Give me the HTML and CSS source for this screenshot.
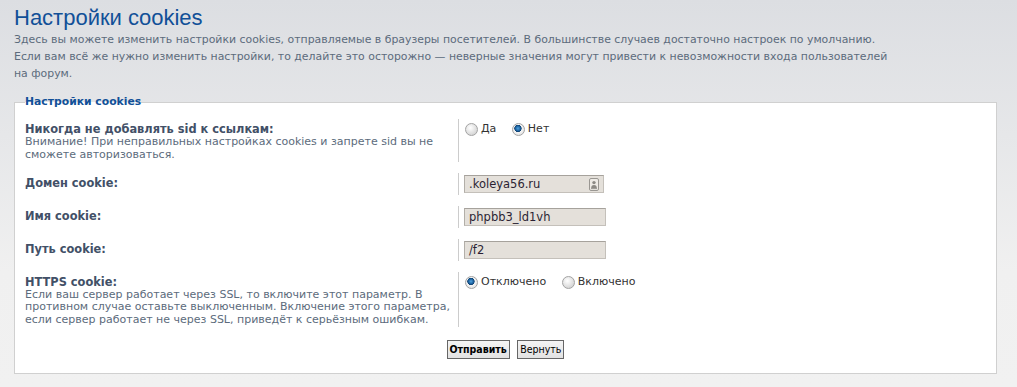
FILE: index.html
```html
<!DOCTYPE html>
<html lang="ru">
<head>
  <meta charset="UTF-8">
  <title>Настройки cookies</title>
  <link rel="stylesheet" href="styles.css">
</head>
<body>
  <div class="main">
    <h1>Настройки cookies</h1>
    <p class="intro">Здесь вы можете изменить настройки cookies, отправляемые в браузеры посетителей. В большинстве случаев достаточно настроек по умолчанию.<br>Если вам всё же нужно изменить настройки, то делайте это осторожно — неверные значения могут привести к невозможности входа пользователей на форум.</p>

    <form>
      <fieldset>
        <legend>Настройки cookies</legend>

        <dl>
          <dt>
            <label>Никогда не добавлять sid к ссылкам:</label>
            <span class="explain">Внимание! При неправильных настройках cookies и запрете sid вы не сможете авторизоваться.</span>
          </dt>
          <dd>
            <span class="radio"></span><span class="opt">Да</span>
            <span class="radio checked"></span><span class="opt">Нет</span>
          </dd>
        </dl>

        <dl>
          <dt><label>Домен cookie:</label></dt>
          <dd>
            <span class="field">
              <span class="input short">.koleya56.ru</span>
              <svg class="autofill" width="10" height="13" viewBox="0 0 10 13">
                <rect x="0.5" y="0.5" width="9" height="12" rx="1.5" fill="#eeebe6" stroke="#9a9792"/>
                <circle cx="5" cy="4.6" r="1.7" fill="#8d8a85"/>
                <path d="M2.2 10 Q2.2 6.9 5 6.9 Q7.8 6.9 7.8 10 Z" fill="#8d8a85"/>
                <rect x="2" y="10.2" width="6" height="0.9" fill="#8d8a85"/>
              </svg>
            </span>
          </dd>
        </dl>

        <dl>
          <dt><label>Имя cookie:</label></dt>
          <dd><span class="input">phpbb3_ld1vh</span></dd>
        </dl>

        <dl>
          <dt><label>Путь cookie:</label></dt>
          <dd><span class="input">/f2</span></dd>
        </dl>

        <dl>
          <dt>
            <label>HTTPS cookie:</label>
            <span class="explain">Если ваш сервер работает через SSL, то включите этот параметр. В противном случае оставьте выключенным. Включение этого параметра, если сервер работает не через SSL, приведёт к серьёзным ошибкам.</span>
          </dt>
          <dd>
            <span class="radio checked"></span><span class="opt">Отключено</span>
            <span class="radio"></span><span class="opt">Включено</span>
          </dd>
        </dl>

        <p class="submit-buttons">
          <button type="button" class="button1">Отправить</button>
          <button type="button" class="button2">Вернуть</button>
        </p>
      </fieldset>
    </form>
  </div>
</body>
</html>
```

FILE: styles.css
```css
:root {
  --title-color: #115098;
  --text-color: #536482;
  --label-color: #425067;
  --border-color: #cccccc;
}

html, body {
  height: 100%;
}

body {
  margin: 0;
  font-family: "DejaVu Sans", Verdana, sans-serif;
  font-size: 11px;
  color: var(--text-color);
  background: linear-gradient(#dcdee2, #f0f0f0 70%, #f1f1f1);
}

.main {
  padding: 0 20px 0 14px;
}

h1 {
  margin: 0;
  padding-top: 5px;
  font-family: "Liberation Sans", Arial, sans-serif;
  font-size: 22px;
  font-weight: normal;
  line-height: 26px;
  color: var(--title-color);
}

.intro {
  margin: 0 96px 0 0;
  font-size: 10.9px;
  line-height: 17px;
  color: #5c6b7c;
}

form {
  margin-top: 13px;
}

fieldset {
  margin: 0;
  padding: 10px 10px 14px 10px;
  background: #ffffff;
  border: 1px solid #d0d0d0;
}

legend {
  padding: 0;
  font-size: 10.8px;
  font-weight: bold;
  line-height: 14px;
  color: var(--title-color);
}

dl {
  display: grid;
  grid-template-columns: 433px 1fr;
  margin: 0 0 11px;
}

dt {
  padding-top: 3px;
}

dt label {
  display: block;
  font-size: 11.4px;
  font-weight: bold;
  line-height: 14px;
  color: var(--label-color);
}

.explain {
  display: block;
  line-height: 12.8px;
  color: #5c6b7c;
}

dd {
  margin: 0;
  padding: 2px 0 2px 5px;
  border-left: 1px solid var(--border-color);
}

.radio {
  display: inline-block;
  width: 11px;
  height: 11px;
  margin: 2px 3px 0 1px;
  vertical-align: top;
  border: 1px solid #a3a3a3;
  border-radius: 50%;
  background: radial-gradient(circle at 40% 35%, #ffffff, #dedede 60%, #c9c9c9);
}

.radio.checked {
  background: radial-gradient(circle at 45% 40%, #4fa3e0 0, #1a5f9c 2.5px, #0e3f6e 3.4px, #f4f4f4 3.9px, #d9d9d9 100%);
}

.opt {
  display: inline-block;
  margin-right: 11px;
  line-height: 16px;
  color: #333333;
}

.field {
  position: relative;
  display: inline-block;
}

.input {
  display: block;
  box-sizing: border-box;
  width: 142px;
  height: 18px;
  padding: 0 4px;
  line-height: 16px;
  font-size: 11.5px;
  color: #2b1f33;
  background: #e4e0da;
  border: 1px solid #c4c0ba;
  border-top-color: #a6a29c;
  border-left-color: #b2aea8;
}

.input.short {
  width: 140px;
}

.autofill {
  position: absolute;
  top: 3px;
  right: 5px;
}

.submit-buttons {
  margin: 13px 0 0;
  text-align: center;
}

.submit-buttons button {
  height: 19px;
  margin: 0 2px;
  padding: 0 2px;
  font-family: "DejaVu Sans Condensed", "DejaVu Sans", Verdana, sans-serif;
  font-size: 10.5px;
  color: #000000;
  background: linear-gradient(#f4f4f4, #e2e2e2);
  border: 1px solid #666666;
  border-radius: 0;
}

.button1 {
  font-weight: bold;
}
```
